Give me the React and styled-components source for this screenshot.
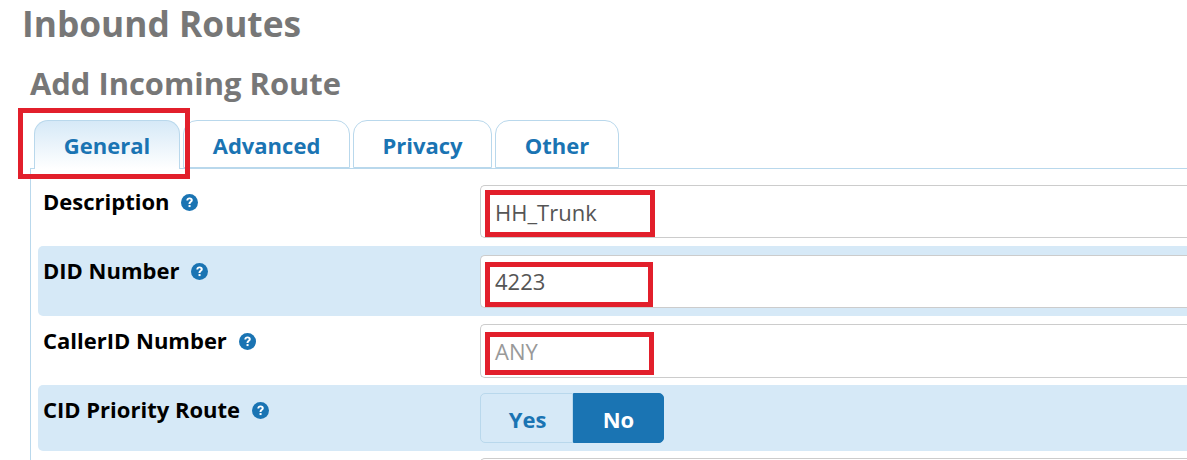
import styled, { createGlobalStyle } from "styled-components";

const GlobalStyle = createGlobalStyle`
  html, body {
    margin: 0;
    padding: 0;
    background: #fff;
    overflow: hidden;
    font-family: "Open Sans", "Liberation Sans", sans-serif;
  }
`;

const Page = styled.div`
  width: 1187px;
  height: 460px;
  overflow: hidden;
`;

const Title = styled.h1`
  margin: 0;
  padding: 1px 0 0 22px;
  height: 61px;
  box-sizing: border-box;
  font-size: 35.3px;
  line-height: 44px;
  font-weight: 700;
  color: #777;
`;

const SubTitle = styled.h2`
  margin: 0;
  padding-left: 30px;
  height: 59px;
  font-size: 30.9px;
  line-height: 44px;
  font-weight: 700;
  color: #777;
`;

const TabBar = styled.div`
  display: flex;
  height: 48px;
  margin-left: 34px;
`;

const Tab = styled.div`
  position: relative;
  box-sizing: border-box;
  width: ${props => props.width}px;
  margin-right: ${props => props.gap}px;
  height: ${props => props.active ? 49 : 48}px;
  z-index: ${props => props.active ? 2 : 0};
  border: 1px solid #b9d8ec;
  border-bottom: ${props => props.active ? "none" : "1px solid #b9d8ec"};
  border-radius: 14px 14px 0 0;
  background: ${props => props.active ? "linear-gradient(#d6e9f7, #fff)" : "#fff"};
  color: #1a74b3;
  font-size: 22px;
  font-weight: 700;
  line-height: 48px;
  text-align: center;
`;

const Panel = styled.div`
  box-sizing: border-box;
  border-left: 1px solid #b9d8ec;
  border-top: 1px solid #b9d8ec;
  margin-left: 30px;
  padding: 8px 0 0 7px;
  height: 292px;
`;

const Row = styled.div`
  display: grid;
  grid-template-columns: 437px 1fr;
  box-sizing: border-box;
  height: ${props => props.height}px;
  padding: ${props => props.top}px 0 0 5px;
  border-radius: 5px 0 0 5px;
  background: ${props => props.shaded ? "#d6e9f7" : "transparent"};
`;

const Label = styled.div`
  display: flex;
  align-items: flex-start;
  gap: ${props => props.gap || 12}px;
  font-size: 22px;
  line-height: 30px;
  font-weight: 700;
  color: #000;
  margin-top: ${props => props.lift}px;
`;

const HelpBadge = styled.span`
  display: block;
  margin-top: 8px;
  color: #1a74b3;
  line-height: 0;
`;

const Field = styled.div`
  position: relative;
  box-sizing: border-box;
  height: ${props => props.height}px;
  padding-left: 14px;
  border: 1px solid #ccc;
  border-right: none;
  border-radius: 5px 0 0 5px;
  background: #fff;
  font-size: 22px;
  line-height: ${props => props.height - 2 + (props.nudge || 0)}px;
  color: ${props => props.muted ? "#999" : "#555"};
`;

const Highlight = styled.div`
  position: absolute;
  box-sizing: border-box;
  left: ${props => props.left}px;
  top: ${props => props.top}px;
  width: ${props => props.width}px;
  height: ${props => props.height}px;
  border: 5px solid #e21f2b;
  pointer-events: none;
`;

const Toggle = styled.div`
  display: flex;
  width: 184px;
  height: 50px;
`;

const ToggleOption = styled.div`
  box-sizing: border-box;
  width: ${props => props.width}px;
  padding-left: ${props => props.on ? 0 : 2}px;
  border: 1px solid ${props => props.on ? "#1a74b3" : "#b9d8ec"};
  border-radius: ${props => props.on ? "0 5px 5px 0" : "5px 0 0 5px"};
  background: ${props => props.on ? "#1a74b3" : "#d6e9f7"};
  color: ${props => props.on ? "#fff" : "#1a74b3"};
  font-size: 22px;
  font-weight: 700;
  line-height: 50px;
  text-align: center;
`;

const Help = () => (
  <HelpBadge>
    <svg width="17" height="17" viewBox="0 0 16 16">
      <circle cx="8" cy="8" r="8" fill="currentColor" />
      <path d="M5 6.1c0-1.7 1.3-2.7 3.1-2.7s3 1 3 2.4c0 2-2.2 2-2.2 3.5H7.1c0-2.3 2-2.3 2-3.4 0-.5-.4-.9-1.1-.9-.7 0-1.1.4-1.2 1.1z" fill="#fff" />
      <rect x="7.1" y="10.4" width="1.9" height="1.9" fill="#fff" />
    </svg>
  </HelpBadge>
);

const tabs = [
  { name: "General", width: 146, gap: 3, active: true },
  { name: "Advanced", width: 167, gap: 3 },
  { name: "Privacy", width: 139, gap: 3 },
  { name: "Other", width: 124, gap: 0 },
];

export default function App() {
  return (
    <Page>
      <GlobalStyle />
      <Title>Inbound Routes</Title>
      <SubTitle>Add Incoming Route</SubTitle>
      <TabBar>
        {tabs.map(t => (
          <Tab key={t.name} width={t.width} gap={t.gap} active={t.active}>
            {t.name}
            {t.active && <Highlight left={-17} top={-13} width={172} height={71} />}
          </Tab>
        ))}
      </TabBar>
      <Panel>
        <Row height={69} top={8}>
          <Label lift={1} gap={11}>Description <Help /></Label>
          <Field height={53} nudge={2}>
            HH_Trunk
            <Highlight left={4} top={4} width={170} height={47} />
          </Field>
        </Row>
        <Row height={70} top={9} shaded>
          <Label lift={0}>DID Number <Help /></Label>
          <Field height={53}>
            4223
            <Highlight left={4} top={6} width={168} height={45} />
          </Field>
        </Row>
        <Row height={69} top={8}>
          <Label lift={1}>CallerID Number <Help /></Label>
          <Field height={54} muted>
            ANY
            <Highlight left={4} top={7} width={169} height={43} />
          </Field>
        </Row>
        <Row height={66} top={8} shaded>
          <Label lift={1}>CID Priority Route <Help /></Label>
          <Toggle>
            <ToggleOption width={93}>Yes</ToggleOption>
            <ToggleOption width={91} on>No</ToggleOption>
          </Toggle>
        </Row>
        <Row height={20} top={7}>
          <span />
          <Field height={30} />
        </Row>
      </Panel>
    </Page>
  );
}
